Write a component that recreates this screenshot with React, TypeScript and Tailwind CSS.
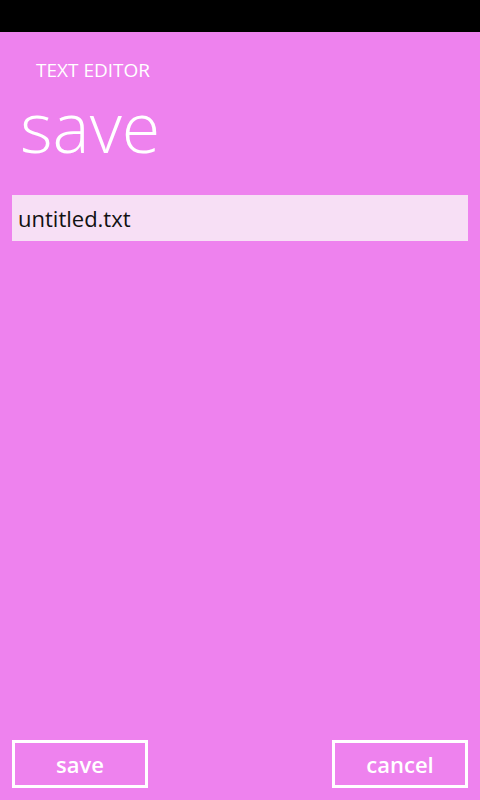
export default function App() {
  return (
    <div className="flex h-[800px] w-[480px] flex-col bg-[#ee82ee] font-['Open_Sans',sans-serif] text-white">
      <div className="h-8 shrink-0 bg-black" />
      <div className="pl-9 pt-[26px] text-[19px] leading-6">TEXT EDITOR</div>
      <h1 className="mt-[6px] pl-[20px] text-[70px] font-light leading-[76px]">save</h1>
      <div className="mx-3 mt-[31px] flex h-[46px] items-center bg-[#f7dff5] px-[6px] text-[22px] text-[#111]">
        untitled.txt
      </div>
      <div className="flex-1" />
      <div className="flex justify-between px-3 pb-3">
        <button className="flex h-12 w-[136px] items-center justify-center border-[3px] border-white text-[22px] font-semibold">
          save
        </button>
        <button className="flex h-12 w-[136px] items-center justify-center border-[3px] border-white text-[22px] font-semibold">
          cancel
        </button>
      </div>
    </div>
  );
}
